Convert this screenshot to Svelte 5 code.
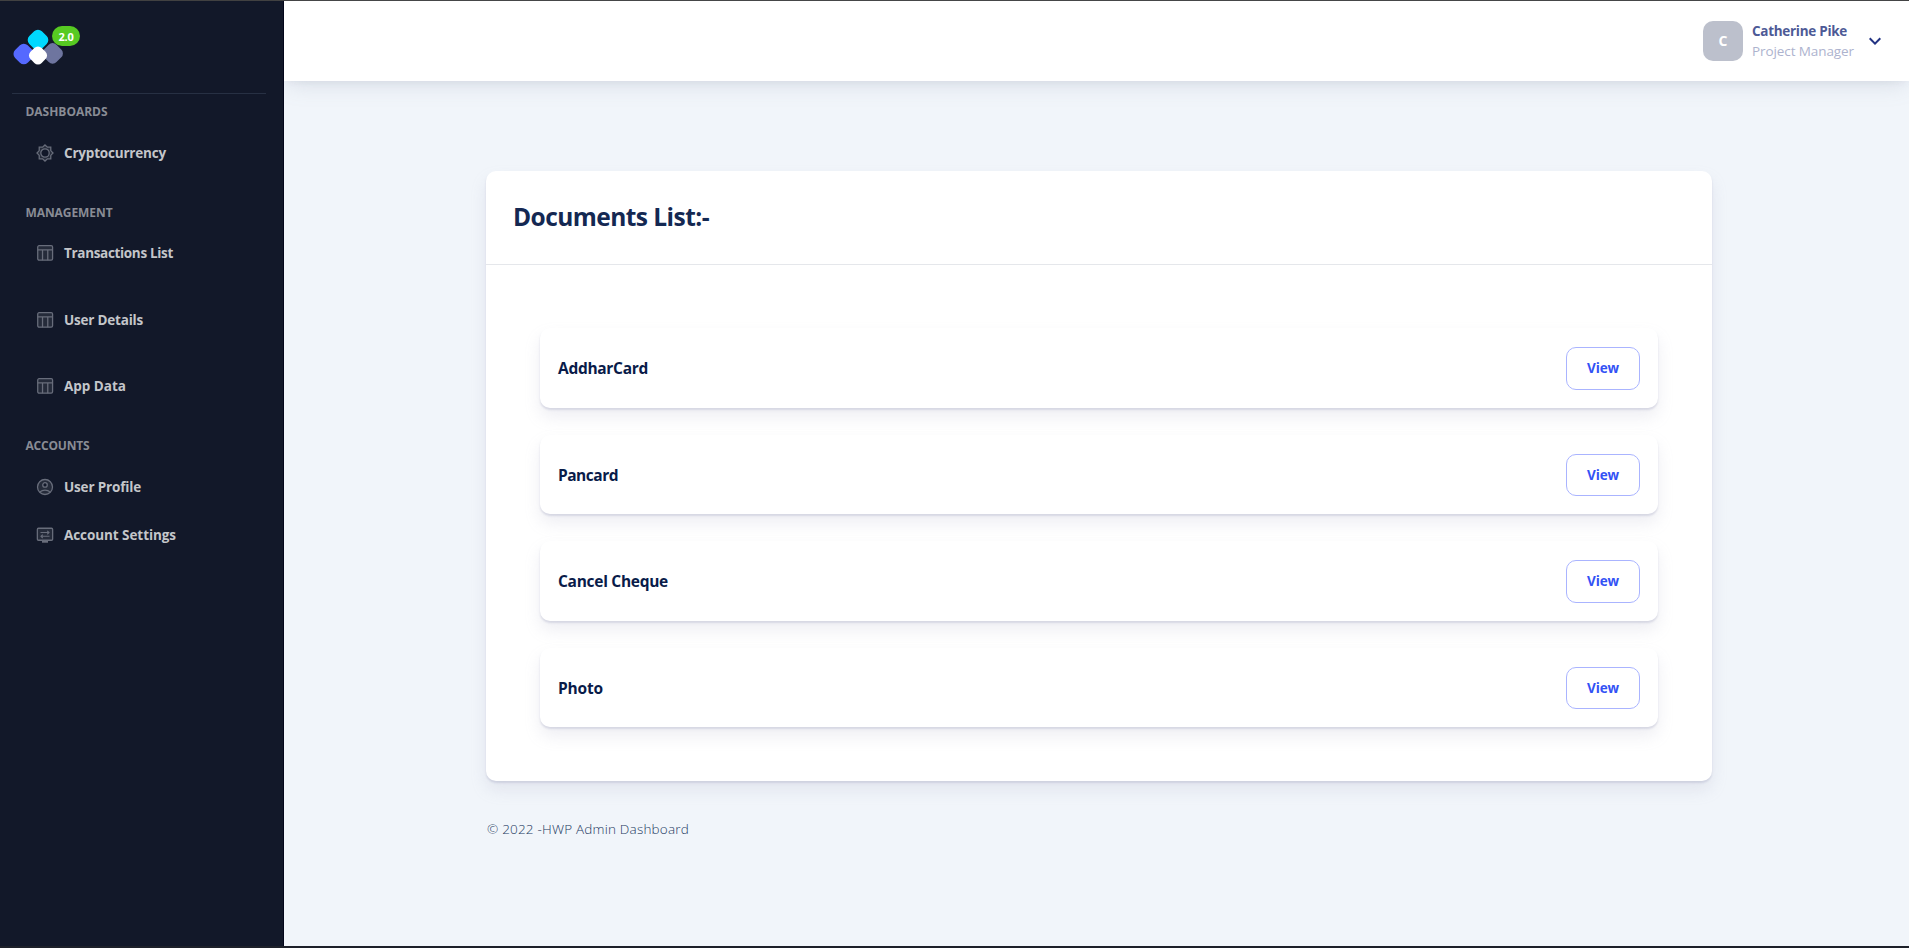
<script>
  const groups = [
    { title: 'DASHBOARDS', w: 82, cls: 'g1', items: [{ t: 'Cryptocurrency', w: 102, icon: 'gear', h: 48 }] },
    { title: 'MANAGEMENT', w: 87, cls: 'g2', items: [
      { t: 'Transactions List', w: 109, icon: 'table', h: 66.5 },
      { t: 'User Details', w: 79, icon: 'table', h: 66.5 },
      { t: 'App Data', w: 62, icon: 'table', h: 66 }
    ] },
    { title: 'ACCOUNTS', w: 64, cls: 'g3', items: [
      { t: 'User Profile', w: 77, icon: 'user', h: 48 },
      { t: 'Account Settings', w: 112, icon: 'display', h: 48 }
    ] }
  ];
  const docs = [
    { t: 'AddharCard', w: 90 },
    { t: 'Pancard', w: 60 },
    { t: 'Cancel Cheque', w: 110 },
    { t: 'Photo', w: 45 }
  ];

  // Tracks the letters of a label so that it fills the given width.
  function fit(node, width) {
    const apply = () => {
      node.style.letterSpacing = '0px';
      const natural = node.getBoundingClientRect().width;
      node.style.letterSpacing = (width - natural) / node.textContent.length + 'px';
    };
    apply();
    document.fonts?.ready.then(apply);
  }
</script>

<div class="app">
  <aside>
    <div class="brand">
      <svg class="logo" width="70" height="44" viewBox="10 22 70 44">
        <rect x="-8.9" y="-8.9" width="17.8" height="17.8" rx="5.5" transform="translate(23.8 54) rotate(45)" fill="#5569ff" />
        <rect x="-8.9" y="-8.9" width="17.8" height="17.8" rx="5.5" transform="translate(52.6 53.4) rotate(45)" fill="#6e759f" />
        <rect x="-8.9" y="-8.9" width="17.8" height="17.8" rx="5.5" transform="translate(38 40) rotate(45)" fill="#00d8ff" />
        <rect x="-7.9" y="-7.9" width="15.8" height="15.8" rx="5.2" transform="translate(38 55.4) rotate(45)" fill="#fff" />
      </svg>
      <span class="version"><span use:fit={15}>2.0</span></span>
    </div>
    <hr />
    {#each groups as g}
      <section class={g.cls}>
        <h3><span use:fit={g.w}>{g.title}</span></h3>
        {#each g.items as i}
          <a class="item" style:height="{i.h}px">
            <svg width="18" height="18" viewBox="0 0 24 24" fill="none" stroke="#686d7b" stroke-width="1.7">
              {#if i.icon === 'gear'}
                <path d="M12 1.3 15.2 4.3H19.7V8.8L22.7 12 19.7 15.2V19.7H15.2L12 22.7 8.8 19.7H4.3V15.2L1.3 12 4.3 8.8V4.3H8.8Z" fill="#252b3a" />
                <circle cx="12" cy="12" r="5.6" fill="#121829" />
              {:else if i.icon === 'table'}
                <rect x="2.3" y="2.3" width="19.8" height="19.2" rx="1.8" fill="#252b3a" />
                <path d="M2 7.7H22M8.7 8V21.5M15.7 8V21.5" />
              {:else if i.icon === 'user'}
                <circle cx="12" cy="12" r="10" fill="#252b3a" />
                <circle cx="12" cy="9.3" r="3" fill="#121829" />
                <path d="M5.4 18.5C8.7 15.4 15.3 15.4 18.6 18.5" />
              {:else}
                <rect x="1.8" y="3" width="20.4" height="16" rx="1.5" fill="#252b3a" />
                <path d="M8 21H16" stroke-width="2.6" />
                <path d="M6 8.7H17M15 6.4 17.4 8.7 15 11M18 13.7H7M9 11.4 6.6 13.7 9 16" stroke-width="1.4" />
              {/if}
            </svg>
            <span use:fit={i.w}>{i.t}</span>
          </a>
        {/each}
      </section>
    {/each}
  </aside>
  <div class="right">
    <header>
      <div class="avatar">C</div>
      <div class="who">
        <div class="name"><span use:fit={95}>Catherine Pike</span></div>
        <div class="role"><span use:fit={102}>Project Manager</span></div>
      </div>
      <svg class="chev" width="24" height="24" viewBox="0 0 24 24"><path fill="#223383" d="M7.41 8.59 12 13.17l4.59-4.58L18 10l-6 6-6-6z" /></svg>
    </header>
    <main>
      <div class="card">
        <div class="head"><h1><span use:fit={196}>Documents List:-</span></h1></div>
        <div class="list">
          {#each docs as d}
            <div class="doc">
              <span class="title" use:fit={d.w}>{d.t}</span>
              <button><span use:fit={32}>View</span></button>
            </div>
          {/each}
        </div>
      </div>
      <footer><span use:fit={202}>© 2022 -HWP Admin Dashboard</span></footer>
    </main>
  </div>
</div>

<style>
  :global(body) { margin: 0; overflow: hidden; }
  * { box-sizing: border-box; }
  span { white-space: nowrap; }
  .app {
    height: 948px;
    display: flex;
    border-top: 1px solid #414141;
    border-bottom: 2px solid #1d2029;
    background: #f1f5fa;
    font-family: 'Open Sans', 'Noto Sans', sans-serif;
  }
  aside { position: relative; z-index: 1; width: 284px; background: #121829; border-right: 1px solid #03061a; }
  .brand { height: 92px; display: flex; padding: 21px 0 0 10px; }
  .logo { flex: none; margin-right: -28px; }
  .version {
    width: 28px; height: 20px; margin-top: 4px; position: relative;
    border-radius: 10px; background: #57ca22; color: #fff;
    font-size: 11px; font-weight: 700; line-height: 21px; padding-left: 6.5px;
  }
  hr { margin: 0 17px 0 12px; border: 0; height: 1px; background: #273043; }
  h3 { margin: 0; height: 34px; padding-left: 25.5px; font-size: 12px; line-height: 34px; font-weight: 700; color: #898c95; }
  .g1 { height: 102px; padding-top: 1px; }
  .g1 .item { padding-top: 15px; }
  .g3 .item { padding-top: 15px; }
  .g2 { height: 233px; }
  .item { display: flex; align-items: flex-start; padding: 14px 0 0 36px; color: #c4c6ca; font-size: 13.5px; font-weight: 700; line-height: 19px; }
  .item svg { margin-right: 10px; flex: none; }
  .right { flex: 1; display: flex; flex-direction: column; }
  header {
    height: 80px; background: #fff; display: flex; align-items: flex-start; padding: 20px 22px 0 0; justify-content: flex-end;
    box-shadow: 0 2px 8px -3px rgba(159, 162, 191, .2), 0 5px 22px -4px rgba(130, 145, 165, .28);
  }
  .avatar { width: 40px; height: 40px; border-radius: 10px; background: #bcc0cc; color: #fff; font-weight: 700; font-size: 14px; line-height: 40px; text-align: center; }
  .who { width: 102px; margin: 0 9px 0 9px; }
  .name { font-size: 13.5px; line-height: 20px; font-weight: 700; color: #4d5a96; }
  .role { font-size: 13.5px; line-height: 20px; color: #adb3ce; }
  .chev { margin-top: 8px; }
  main { padding: 90px 197px 0 202px; }
  .card, .doc { background: #fff; border-radius: 10px; box-shadow: 0 9px 16px rgba(159, 162, 191, .18), 0 2px 2px rgba(159, 162, 191, .32); }
  .card { height: 610px; }
  .head { height: 94px; border-bottom: 1px solid #e5e7eb; padding: 28px 0 0 27px; }
  h1 { margin: 0; font-size: 24.5px; font-weight: 700; line-height: 36px; color: #142852; }
  .list { padding: 63px 54px 0; display: flex; flex-direction: column; gap: 27px; }
  .doc { height: 79.5px; display: flex; align-items: center; justify-content: space-between; padding: 1px 18px 0; }
  .title { font-size: 15.5px; font-weight: 700; color: #091b49; }
  button { width: 74px; height: 42.5px; border: 1px solid #aab4ff; border-radius: 10px; background: #fff; color: #3352f5; font: 700 13.5px 'Open Sans', sans-serif; padding: 0; }
  footer { padding: 38px 0 0 1px; font-size: 13.5px; line-height: 20px; font-weight: 300; color: #233961; }
</style>
